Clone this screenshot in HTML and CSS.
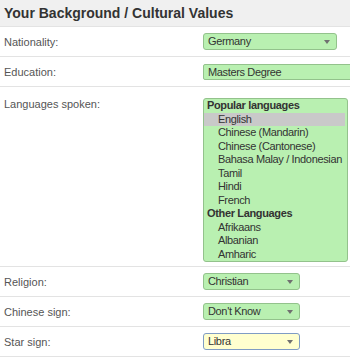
FILE: index.html
```html
<!DOCTYPE html>
<html lang="en">
<head>
    <meta charset="UTF-8">
    <title>Your Background / Cultural Values</title>
    <link rel="stylesheet" href="styles.css">
</head>
<body>
    <div class="panel">
        <div class="panel-header">Your Background / Cultural Values</div>

        <div class="row">
            <div class="label">Nationality:</div>
            <div class="field">
                <div class="dropdown wide">Germany<span class="arrow"></span></div>
            </div>
        </div>

        <div class="row">
            <div class="label">Education:</div>
            <div class="field">
                <div class="textbox">Masters Degree</div>
            </div>
        </div>

        <div class="row row-top">
            <div class="label">Languages spoken:</div>
            <div class="field">
                <div class="listbox">
                    <div class="group">Popular languages</div>
                    <div class="option selected">English</div>
                    <div class="option">Chinese (Mandarin)</div>
                    <div class="option">Chinese (Cantonese)</div>
                    <div class="option">Bahasa Malay / Indonesian</div>
                    <div class="option">Tamil</div>
                    <div class="option">Hindi</div>
                    <div class="option">French</div>
                    <div class="group">Other Languages</div>
                    <div class="option">Afrikaans</div>
                    <div class="option">Albanian</div>
                    <div class="option">Amharic</div>
                </div>
            </div>
        </div>

        <div class="row">
            <div class="label">Religion:</div>
            <div class="field">
                <div class="dropdown">Christian<span class="arrow"></span></div>
            </div>
        </div>

        <div class="row">
            <div class="label">Chinese sign:</div>
            <div class="field">
                <div class="dropdown">Don't Know<span class="arrow"></span></div>
            </div>
        </div>

        <div class="row">
            <div class="label">Star sign:</div>
            <div class="field">
                <div class="dropdown focused">Libra<span class="arrow"></span></div>
            </div>
        </div>
    </div>
</body>
</html>
```

FILE: styles.css
```css
:root {
    --text-color: #555;
    --line-color: #e3e3e3;
    --valid-bg: #b9f0b1;
    --valid-border: #93c28c;
}

* {
    margin: 0;
    padding: 0;
    box-sizing: border-box;
}

body {
    font-family: 'Liberation Sans', Arial, sans-serif;
    font-size: 11px;
    color: var(--text-color);
    background: #fff;
    overflow: hidden;
}

.panel {
    width: 350px;
}

.panel-header {
    height: 27px;
    line-height: 26px;
    padding-left: 4px;
    background: #f0f0f0;
    border-bottom: 1px solid var(--line-color);
    font-size: 14px;
    font-weight: bold;
    color: #333;
    white-space: nowrap;
}

.row {
    display: flex;
    align-items: center;
    height: 30px;
    border-bottom: 1px solid var(--line-color);
}

.row-top {
    align-items: flex-start;
    height: 180px;
    padding-top: 11px;
}

.label {
    width: 203px;
    flex-shrink: 0;
    padding-left: 4px;
}

.field {
    flex: 1;
    min-width: 0;
    display: flex;
}

.dropdown,
.textbox,
.listbox {
    background: var(--valid-bg);
    border: 1px solid var(--valid-border);
    color: #333;
    white-space: nowrap;
    letter-spacing: -0.35px;
}

.dropdown {
    position: relative;
    width: 97px;
    height: 17px;
    line-height: 15px;
    padding-left: 4px;
    border-radius: 3px;
}

.dropdown.wide {
    width: 134px;
}

.dropdown.focused {
    background: #ffffcf;
    border-color: #7f9cc4;
}

.arrow {
    position: absolute;
    right: 6px;
    top: 6px;
    width: 0;
    height: 0;
    border-left: 3px solid transparent;
    border-right: 3px solid transparent;
    border-top: 4px solid #707070;
}

.textbox {
    width: 160px;
    flex-shrink: 0;
    height: 16px;
    line-height: 14px;
    padding-left: 4px;
    border-radius: 2px 0 0 2px;
}

.listbox {
    width: 145px;
    height: 164px;
    border-radius: 3px;
    overflow: hidden;
}

.group {
    height: 13.5px;
    line-height: 13.5px;
    padding-left: 3px;
    font-weight: bold;
}

.option {
    height: 13.5px;
    line-height: 13.5px;
    padding-left: 14px;
}

.option.selected {
    background: #c9c9c9;
    margin-right: 2px;
}
```
